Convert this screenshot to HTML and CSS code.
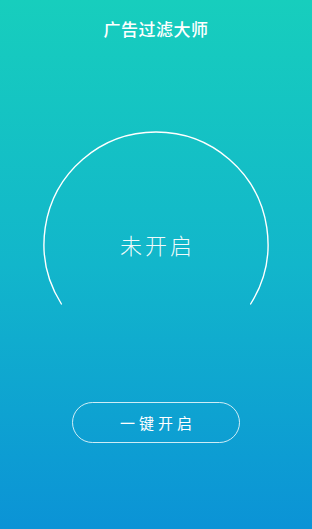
FILE: index.html
```html
<!DOCTYPE html>
<html lang="zh">
<head>
    <meta charset="UTF-8">
    <meta name="viewport" content="width=312, user-scalable=no">
    <title>广告过滤大师</title>
    <link rel="stylesheet" href="styles.css">
</head>
<body>
    <div class="app">
        <header>广告过滤大师</header>

        <div class="dial">
            <svg class="ring" width="230" height="230" viewBox="0 0 230 230">
                <path d="M20.4 175 A112 112 0 1 1 209.6 175" fill="none" stroke="#ffffff" stroke-width="1.4" stroke-linecap="round"/>
            </svg>
            <span class="status">未开启</span>
        </div>

        <button class="toggle">一键开启</button>
    </div>
</body>
</html>
```

FILE: styles.css
```css
body, html {
    margin: 0;
    padding: 0;
    font-family: "Noto Sans CJK SC", "Noto Sans", sans-serif;
}

.app {
    height: 529px;
    display: flex;
    flex-direction: column;
    align-items: center;
    background: linear-gradient(to bottom, #17cebd 0%, #12b6cb 50%, #0b93d6 100%);
    color: white;
    overflow: hidden;
}

header {
    padding-top: 19px;
    line-height: 20px;
    font-size: 17px;
    font-weight: 500;
    letter-spacing: 0.5px;
}

.dial {
    position: relative;
    width: 230px;
    height: 230px;
    margin-top: 90px;
    display: flex;
    justify-content: center;
    align-items: center;
}

.ring {
    position: absolute;
    left: 0;
    top: 0;
}

.status {
    font-size: 22px;
    font-weight: 300;
    letter-spacing: 3px;
    margin-right: -3px;
    color: rgba(255, 255, 255, 0.95);
}

.toggle {
    margin-top: 43px;
    width: 168px;
    height: 41px;
    border: 1px solid rgba(255, 255, 255, 0.8);
    border-radius: 21px;
    background: none;
    color: white;
    font-family: inherit;
    font-size: 15px;
    letter-spacing: 4px;
    padding: 0 0 0 4px;
}
```
